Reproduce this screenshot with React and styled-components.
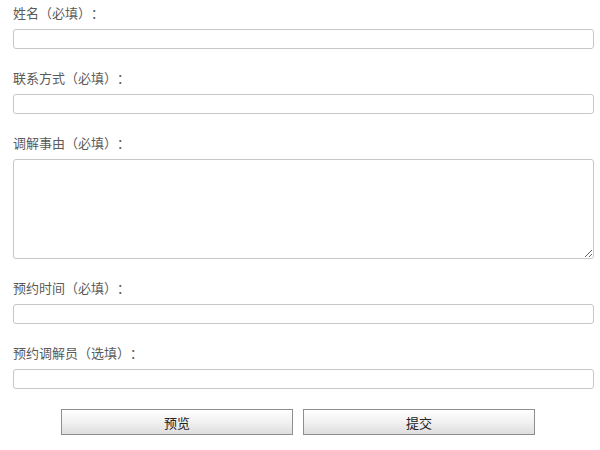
import React from "react";
import styled, { createGlobalStyle } from "styled-components";

const Global = createGlobalStyle`
  html, body { margin: 0; padding: 0; background: #fff; }
  body {
    font-family: "Microsoft YaHei", "Noto Sans CJK SC", sans-serif;
    text-spacing-trim: space-all;
  }
`;

const Form = styled.form`
  padding: 3px 0 0 13px;
  width: 581px;
  display: flex;
  flex-direction: column;
`;

const Field = styled.div`
  display: flex;
  flex-direction: column;
  margin-bottom: 19px;
`;

const Label = styled.label`
  font-size: 13px;
  line-height: 20px;
  height: 20px;
  color: #5a5a5a;
  margin-bottom: 6px;
  text-spacing-trim: space-all;
`;

const Input = styled.input`
  box-sizing: border-box;
  width: 581px;
  height: 20px;
  border: 1px solid #c6c6c6;
  border-radius: 3px;
  padding: 0 4px;
  font-size: 13px;
  outline: none;
  background: #fff;
`;

const TextArea = styled.textarea`
  box-sizing: border-box;
  width: 581px;
  height: 100px;
  border: 1px solid #c6c6c6;
  border-radius: 3px;
  padding: 2px 4px;
  font-size: 13px;
  font-family: inherit;
  outline: none;
  resize: both;
  background: #fff;
  display: block;
`;

const ButtonRow = styled.div`
  display: flex;
  gap: 10px;
  padding-left: 48px;
  margin-top: 1px;
`;

const Button = styled.button`
  box-sizing: border-box;
  width: 232px;
  height: 26px;
  border: 1px solid #8e8e8e;
  border-radius: 0;
  background: linear-gradient(to bottom, #ffffff 0%, #f1f1f1 50%, #dedede 100%);
  font-family: inherit;
  font-size: 13px;
  color: #222;
  cursor: pointer;
  padding: 0;
`;

const fields = [
  { label: "姓名（必填）：" },
  { label: "联系方式（必填）：" },
  { label: "调解事由（必填）：", multi: true },
  { label: "预约时间（必填）：" },
  { label: "预约调解员（选填）：" },
];

export default function App() {
  return (
    <>
      <Global />
      <Form onSubmit={(e) => e.preventDefault()}>
        {fields.map((f) => (
          <Field key={f.label}>
            <Label>{f.label}</Label>
            {f.multi ? <TextArea /> : <Input type="text" />}
          </Field>
        ))}
        <ButtonRow>
          <Button type="button">预览</Button>
          <Button type="submit">提交</Button>
        </ButtonRow>
      </Form>
    </>
  );
}
